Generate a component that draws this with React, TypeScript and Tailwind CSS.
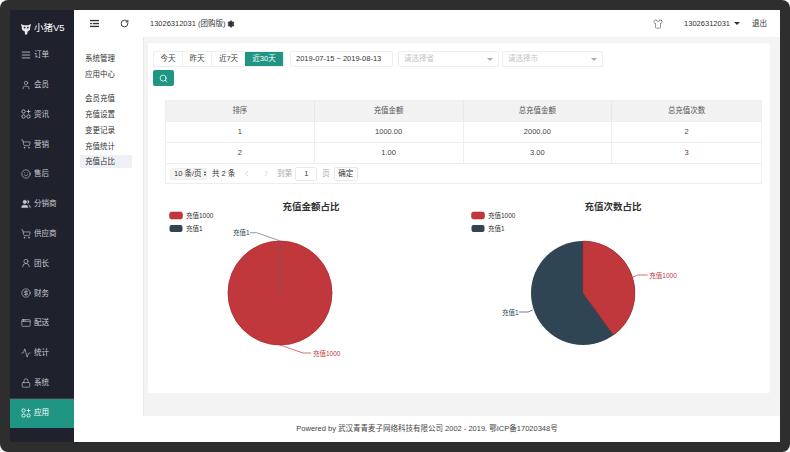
import React from 'react';
import {
  Activity,
  AppWindow,
  ChevronLeft,
  ChevronRight,
  CircleDollarSign,
  Lock,
  RotateCw,
  Search,
  Settings,
  Shirt,
  ShoppingCart,
  Smile,
  User,
  UserRound,
  Users,
} from 'lucide-react';

type IconProps = { className?: string; strokeWidth?: number };

const AppsIcon: React.FC<IconProps> = ({ className }) => (
  <svg viewBox="0 0 12 12" fill="none" stroke="currentColor" strokeWidth="1" className={className}>
    <circle cx="3" cy="3" r="2" />
    <circle cx="3" cy="9" r="2" />
    <circle cx="9" cy="9" r="2" />
    <path d="M9 .8v4.400M6.800 3h4.400" />
  </svg>
);

const LinesIcon: React.FC<IconProps> = ({ className }) => (
  <svg viewBox="0 0 12 12" fill="none" stroke="currentColor" strokeWidth="1" className={className}>
    <path d="M1 2.500h10M1 6h10M1 9.500h10" />
  </svg>
);

const ToggleIcon: React.FC<IconProps> = ({ className }) => (
  <svg viewBox="0 0 10 10" fill="currentColor" className={className}>
    <rect x="0" y="1" width="10" height="1.500" />
    <rect x="3" y="4.300" width="7" height="1.500" />
    <rect x="0" y="7.500" width="10" height="1.500" />
    <rect x="0" y="4.300" width="2" height="1.500" />
  </svg>
);

const SolidUsers: React.FC<IconProps> = ({ className }) => (
  <Users className={`${className} fill-current`} strokeWidth={1.500} />
);

const menu = [
  { label: '订单', icon: LinesIcon },
  { label: '会员', icon: User },
  { label: '资讯', icon: AppsIcon },
  { label: '营销', icon: ShoppingCart },
  { label: '售后', icon: Smile },
  { label: '分销商', icon: SolidUsers },
  { label: '供应商', icon: ShoppingCart },
  { label: '团长', icon: UserRound },
  { label: '财务', icon: CircleDollarSign },
  { label: '配送', icon: AppWindow },
  { label: '统计', icon: Activity },
  { label: '系统', icon: Lock },
];

const rows = [
  ['1', '1000.00', '2000.00', '2'],
  ['2', '1.00', '3.00', '3'],
];

const RED = '#c0383b';
const RED_EDGE = '#b4232a';
const NAVY = '#2f4554';

const Sidebar: React.FC = () => (
  <div className="w-[64px] shrink-0 bg-[#1f222d] flex flex-col text-[#c9cbd0] text-[7.500px]">
    <div className="h-[30px] pt-[7px] flex items-center pl-[10px] gap-[2px] text-white text-[9.500px]">
      <svg width="12" height="12" viewBox="0 0 13 13" fill="#e8e8e8">
        <path d="M1 1l3 1.500h5L12 1l-1 3.500c.5 2-.5 4-2.500 4.500L7.500 12.500h-2L5 9C2.500 8.500 1.500 6.500 2 4.500z" />
        <circle cx="5" cy="5" r="1" fill="#1f222d" />
        <circle cx="8.500" cy="5" r="1" fill="#1f222d" />
      </svg>
      <span>小猪V5</span>
    </div>
    {menu.map(({ label, icon: Icon }) => (
      <div key={label} className="h-[29.800px] flex items-center pl-[11px] gap-[3px]">
        <Icon className="w-[10px] h-[10px]" strokeWidth={1.500} />
        <span>{label}</span>
      </div>
    ))}
    <div className="h-[30px] flex items-center pl-[11px] gap-[3px] bg-[#1f9683] border-t border-[#5a2f38] text-white">
      <AppsIcon className="w-[10px] h-[10px]" />
      <span>应用</span>
    </div>
  </div>
);

const SubNav: React.FC = () => (
  <div className="w-[69px] shrink-0 bg-white pt-[14px] pl-[6px] pr-[11px] text-[7.500px] leading-[15.700px] text-[#333]">
    <div className="px-[5px]">系统管理</div>
    <div className="px-[5px]">应用中心</div>
    <div className="px-[5px] mt-[9px]">会员充值</div>
    <div className="px-[5px]">充值设置</div>
    <div className="px-[5px]">变更记录</div>
    <div className="px-[5px]">充值统计</div>
    <div className="px-[5px] h-[13px] leading-[13px] mt-[1px] bg-[#eef0f5] rounded-[1px]">充值占比</div>
  </div>
);

const Caret: React.FC = () => (
  <span className="w-0 h-0 border-x-[3px] border-x-transparent border-t-[3px] border-t-[#aaa]" />
);

const Filters: React.FC = () => (
  <div className="flex flex-col gap-[3px]">
    <div className="flex items-center h-[16px] text-[7.500px]">
      <div className="flex h-full border border-[#eeeeee] rounded-[2px] text-[#444]">
        <span className="w-[29px] flex items-center justify-center border-r border-[#eeeeee]">今天</span>
        <span className="w-[29px] flex items-center justify-center border-r border-[#eeeeee]">昨天</span>
        <span className="w-[33px] flex items-center justify-center">近7天</span>
        <span className="w-[38px] flex items-center justify-center bg-[#1f9683] text-white">近30天</span>
      </div>
      <div className="ml-[6px] w-[103px] h-full border border-[#eeeeee] rounded-[2px] flex items-center pl-[5px] text-[#333] whitespace-nowrap">
        2019-07-15 ~ 2019-08-13
      </div>
      <div className="ml-[5px] w-[101px] h-full border border-[#eeeeee] rounded-[2px] flex items-center justify-between px-[5px] text-[#c4c4c4]">
        请选择省
        <Caret />
      </div>
      <div className="ml-[3px] w-[101px] h-full border border-[#eeeeee] rounded-[2px] flex items-center justify-between px-[5px] text-[#c4c4c4]">
        请选择市
        <Caret />
      </div>
    </div>
    <div className="w-[21px] h-[16px] bg-[#1f9683] rounded-[2px] flex items-center justify-center text-white">
      <Search className="w-[9px] h-[9px]" strokeWidth={2} />
    </div>
  </div>
);

const DataTable: React.FC = () => (
  <div className="mt-[14px] ml-[12px] mr-[4px] border border-[#eeeeee] text-[7.500px] text-[#444]">
    <div className="grid grid-cols-4 h-[20px] bg-[#f2f2f2] text-[#555]">
      {['排序', '充值金额', '总充值金额', '总充值次数'].map((h) => (
        <div key={h} className="flex items-center justify-center border-r border-[#e8e8e8] last:border-r-0">
          {h}
        </div>
      ))}
    </div>
    {rows.map((row) => (
      <div key={row[0]} className="grid grid-cols-4 h-[21px] border-t border-[#eeeeee]">
        {row.map((c, i) => (
          <div key={i} className="flex items-center justify-center border-r border-[#eeeeee] last:border-r-0">
            {c}
          </div>
        ))}
      </div>
    ))}
    <div className="h-[20px] border-t border-[#eeeeee] flex items-center pl-[4px] text-[#333]">
      <span className="w-[37px] h-[12px] pl-[3px] bg-[#f5f5f5] border border-[#eeeeee] rounded-[2px] flex items-center gap-[2px] whitespace-nowrap">
        10 条/页
        <span className="flex flex-col gap-[1px]">
          <span className="w-0 h-0 border-x-[1.500px] border-x-transparent border-b-[2px] border-b-[#333]" />
          <span className="w-0 h-0 border-x-[1.500px] border-x-transparent border-t-[2px] border-t-[#333]" />
        </span>
      </span>
      <span className="ml-[5px]">共 2 条</span>
      <ChevronLeft className="ml-[7px] w-[9px] h-[9px] text-[#bbb]" strokeWidth={1.500} />
      <ChevronRight className="ml-[11px] w-[9px] h-[9px] text-[#bbb]" strokeWidth={1.500} />
      <span className="ml-[6px] text-[#aaa]">到第</span>
      <span className="ml-[3px] w-[22px] h-[14px] border border-[#e8e8e8] rounded-[2px] flex items-center justify-center">1</span>
      <span className="ml-[5px] text-[#aaa]">页</span>
      <span className="ml-[4px] w-[24px] h-[14px] border border-[#e8e8e8] rounded-[2px] flex items-center justify-center">确定</span>
    </div>
  </div>
);

type PieProps = {
  title: string;
  children: React.ReactNode;
};

// chart is one svg: title, legend and slices, echarts style
const PieChart: React.FC<PieProps> = ({ title, children }) => (
  <svg width="302" height="170" viewBox="0 0 302 170" className="shrink-0">
    <text x="151" y="20" textAnchor="middle" fontSize="9.500" fontWeight="700" fill="#333">{title}</text>
    <rect x="9.500" y="22" width="13" height="7" rx="2" fill={RED} stroke={RED_EDGE} strokeWidth="0.500" />
    <text x="26" y="28" fontSize="6.500" fill="#333">充值1000</text>
    <rect x="9.500" y="35" width="13" height="7" rx="2" fill={NAVY} />
    <text x="26" y="41" fontSize="6.500" fill="#333">充值1</text>
    {children}
  </svg>
);

const Charts: React.FC = () => (
  <div className="mt-[6px] ml-[7px] flex">
    <PieChart title="充值金额占比">
      <circle cx="120" cy="103" r="52" fill={RED} stroke={RED_EDGE} strokeWidth="0.800" />
      <path d="M120 103V51" stroke="#6b5a60" strokeWidth="0.700" fill="none" />
      <path d="M119.500 50.700L96.700 42.700H90" stroke="#5d7482" strokeWidth="0.700" fill="none" />
      <text x="73" y="45" fontSize="6.500" fill={NAVY}>充值1</text>
      <path d="M120 155L143 163H151" stroke={RED} strokeWidth="0.700" fill="none" />
      <text x="153" y="165.500" fontSize="6.500" fill={RED}>充值1000</text>
    </PieChart>
    <PieChart title="充值次数占比">
      <circle cx="121" cy="103" r="52" fill={NAVY} />
      <path d="M121 103V51A52 52 0 0 1 151.600 145z" fill={RED} stroke={RED_EDGE} strokeWidth="0.500" />
      <path d="M171 87L176 85H185.700" stroke={RED} strokeWidth="0.700" fill="none" />
      <text x="187.300" y="87.500" fontSize="6.500" fill={RED}>充值1000</text>
      <path d="M70.700 120L66 122H57" stroke={NAVY} strokeWidth="0.700" fill="none" />
      <text x="40" y="124.500" fontSize="6.500" fill={NAVY}>充值1</text>
    </PieChart>
  </div>
);

export default function App() {
  return (
    <div className="w-[790px] h-[452px] bg-white overflow-hidden font-['Liberation_Sans','Noto_Sans_CJK_SC',sans-serif]">
      <div className="w-full h-full bg-[#2e2e2e] rounded-[8px] p-[10px]">
        <div className="w-full h-full flex overflow-hidden bg-white">
          <Sidebar />
          <div className="flex-1 flex flex-col min-w-0">
            <header className="h-[27px] shrink-0 bg-white flex items-center text-[7.500px] text-[#333]">
              <ToggleIcon className="ml-[16px] w-[9px] h-[9px]" />
              <RotateCw className="ml-[21px] w-[9px] h-[9px]" strokeWidth={2.500} />
              <span className="ml-[21px]">13026312031 (团购版)</span>
              <Settings className="ml-[2px] w-[8px] h-[8px] fill-[#333]" strokeWidth={2} />
              <Shirt className="ml-auto w-[10px] h-[10px]" strokeWidth={1.200} />
              <span className="ml-[21px]">13026312031</span>
              <span className="ml-[4px] w-0 h-0 border-x-[3px] border-x-transparent border-t-[3px] border-t-[#333]" />
              <span className="ml-[12px] mr-[13px]">退出</span>
            </header>
            <div className="flex-1 flex min-h-0">
              <SubNav />
              <div className="flex-1 bg-[#f3f3f3] border-l border-[#e9e9e9] pt-[6px] pl-[4px] pr-[10px] pb-[23px] min-w-0">
                <div className="h-full bg-white rounded-[2px] pt-[8px] pl-[5px] pr-[4px]">
                  <Filters />
                  <DataTable />
                  <Charts />
                </div>
              </div>
            </div>
            <footer className="h-[26px] shrink-0 bg-white flex items-center justify-center text-[7.500px] text-[#444]">
              Powered by 武汉青青麦子网络科技有限公司 2002 - 2019. 鄂ICP备17020348号
            </footer>
          </div>
        </div>
      </div>
    </div>
  );
}
